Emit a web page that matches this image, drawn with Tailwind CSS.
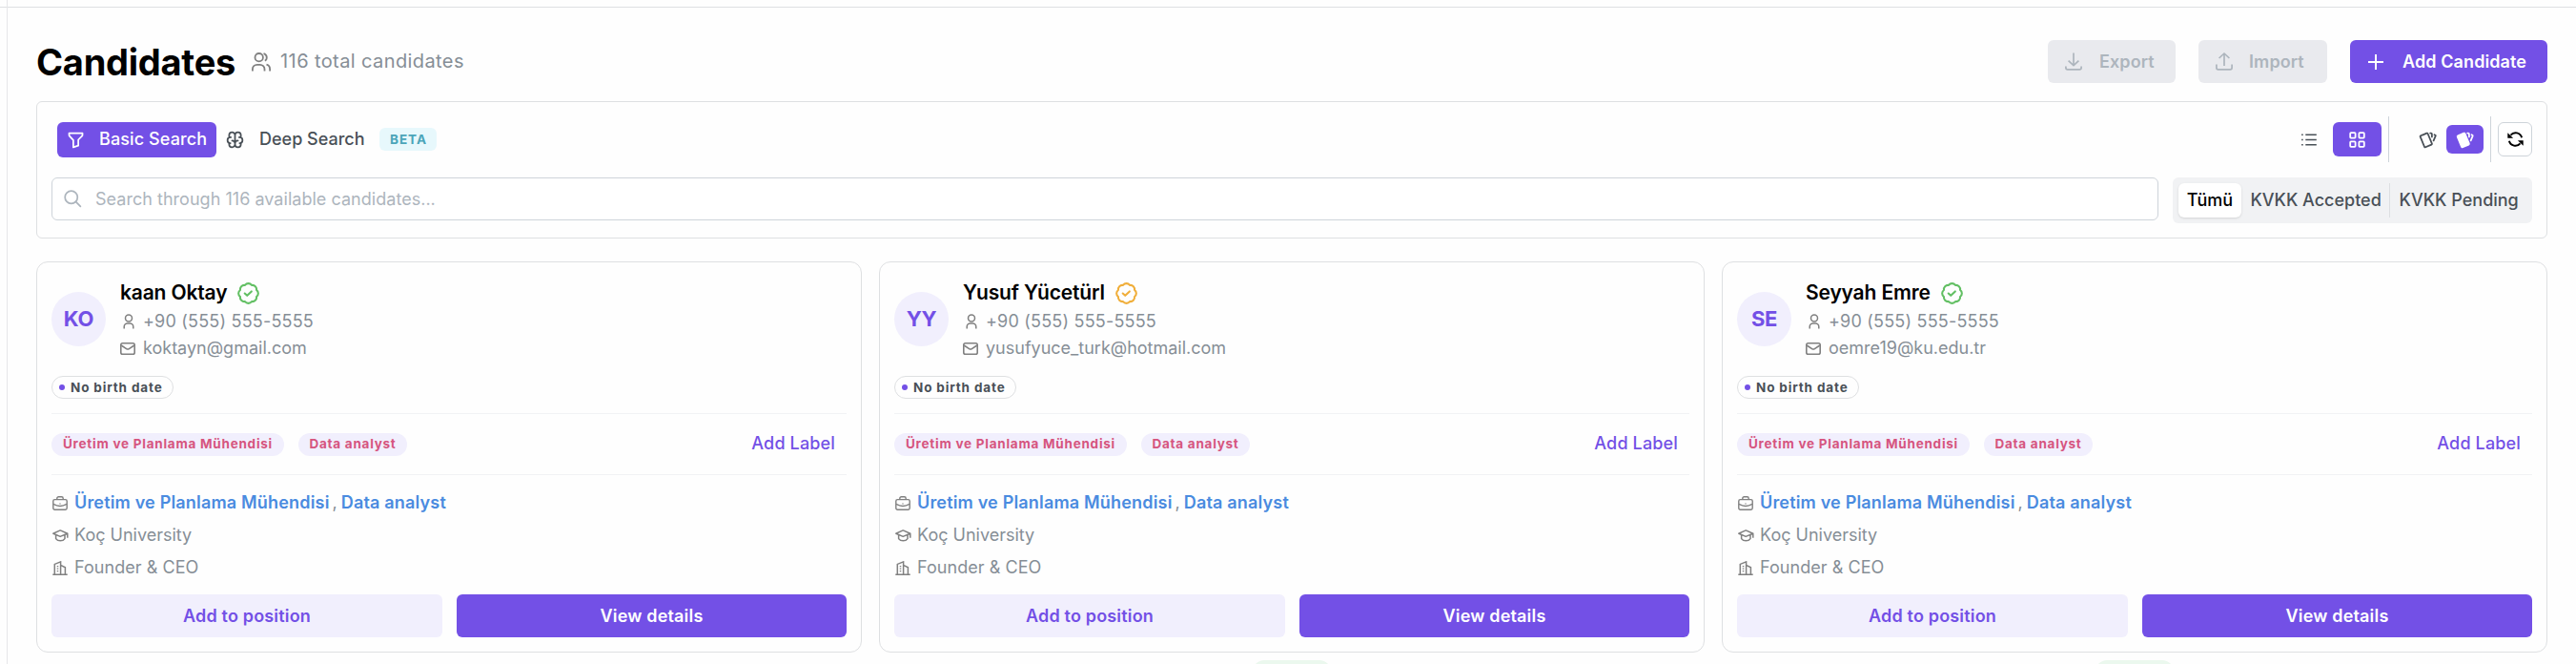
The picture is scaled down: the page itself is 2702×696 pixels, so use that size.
<!doctype html>
<html lang="en">

  <head>
    <meta charset="UTF-8" />
    <meta name="viewport" content="width=device-width, initial-scale=1.0" />
    <title>Candidates</title>
    <script src="https://cdn.jsdelivr.net/npm/@tailwindcss/browser@4"></script>
  </head>

  <body class="bg-[#fefefe] font-[Inter,sans-serif] text-lg text-[#868e96]">

    <!-- Icon sprite -->
    <svg class="hidden" xmlns="http://www.w3.org/2000/svg">
      <symbol id="i-person" viewBox="0 0 12 16">
        <circle cx="6" cy="4.4" r="3.5" />
        <path d="M1.2 15.5v-2a3.4 3.4 0 0 1 3.4-3.4h2.8a3.4 3.4 0 0 1 3.4 3.4v2" />
      </symbol>
      <symbol id="i-mail" viewBox="0 0 16 13">
        <rect x=".8" y=".8" width="14.4" height="11.4" rx="1.8" />
        <path d="M1.2 3l5.4 3.6a2.6 2.6 0 0 0 2.8 0L14.8 3" />
      </symbol>
      <symbol id="i-case" viewBox="0 0 16 15">
        <path d="M4.8 3.6V2.4A1.6 1.6 0 0 1 6.4.8h3.2a1.6 1.6 0 0 1 1.6 1.6v1.2" />
        <rect x=".8" y="3.6" width="14.4" height="10.6" rx="1.6" />
        <path d="M1 8.4c4.5 2.6 9.5 2.6 14 0M8 7.4v1" />
      </symbol>
      <symbol id="i-school" viewBox="0 0 17 13">
        <path d="M.8 4.2L8.2.9l7.6 3.3-7.6 3.2zM15.8 4.4v4.4M3.6 5.8v3.8c2 3 7.4 3 9.4 0V5.8" />
      </symbol>
      <symbol id="i-building" viewBox="0 0 16 15">
        <path d="M.3 14.2h15.4M2.3 14V3.4L8.6.9V14M8.6 4.4l4.8 2.4V14" />
        <path d="M5.5 5v7.6" stroke-dasharray="1.2 1.3" />
      </symbol>
      <symbol id="i-seal" viewBox="2 2 20 20">
        <path d="M21 12c0 1.268-.63 2.39-1.593 3.068a3.745 3.745 0 0 1-1.043 3.296 3.745 3.745 0 0 1-3.296 1.043A3.745 3.745 0 0 1 12 21c-1.268 0-2.39-.63-3.068-1.593a3.746 3.746 0 0 1-3.296-1.043 3.745 3.745 0 0 1-1.043-3.296A3.745 3.745 0 0 1 3 12c0-1.268.63-2.39 1.593-3.068a3.745 3.745 0 0 1 1.043-3.296 3.746 3.746 0 0 1 3.296-1.043A3.746 3.746 0 0 1 12 3c1.268 0 2.39.63 3.068 1.593a3.746 3.746 0 0 1 3.296 1.043 3.746 3.746 0 0 1 1.043 3.296A3.745 3.745 0 0 1 21 12Z" />
        <path d="M8.7 12l2.2 2 4-3.8" />
      </symbol>
    </svg>

    <div class="relative h-[696px] overflow-hidden">
      <!-- App shell edges -->
      <div class="absolute left-0 top-[7px] h-px w-full bg-[#dee0e2]"></div>
      <div class="absolute left-[7px] top-0 h-full w-px bg-[#e6e7e9]"></div>

      <main class="w-[2634px] ml-[38px] pt-[42px]">

        <!-- Title and page actions -->
        <header class="flex h-[45px] items-center">
          <h1 class="text-[38px] leading-none font-bold text-black tracking-[-0.25px]">Candidates</h1>
          <svg class="ml-[17px] w-5 h-5" fill="none" viewBox="0 0 20 20" stroke="#808080" stroke-width="1.8">
            <circle cx="7.7" cy="5.2" r="4.2" />
            <path d="M12.5 1.2a4.2 4.2 0 0 1 1.4 7.6M.9 19.6v-2a4.8 4.8 0 0 1 4.8-4.8h3a4.8 4.8 0 0 1 4.8 4.8v2M15.5 12.6a4.8 4.8 0 0 1 3.6 4.6v2.4" />
          </svg>
          <span class="ml-[10px] text-[20px] tracking-[0.4px]">116 total candidates</span>
          <div class="ml-auto flex gap-6 font-semibold tracking-[0.1px]">
            <button class="flex h-[45px] w-[134px] items-center rounded-md bg-[#e9eaee] pl-[18px] text-[#adb5bd]">
              <svg class="w-[18px] h-[19px]" fill="none" viewBox="0 0 18 19" stroke="currentColor" stroke-width="1.7" stroke-linejoin="round">
                <path d="M9 .5v13M3.6 8.6L9 13.7l5.4-5.1M.9 14.5v1.6a1.8 1.8 0 0 0 1.8 1.8h12.6a1.8 1.8 0 0 0 1.8-1.8v-1.6" />
              </svg>
              <span class="ml-[18px]">Export</span>
            </button>
            <button class="flex h-[45px] w-[135px] items-center rounded-md bg-[#e9eaee] pl-[18px] text-[#adb5bd]">
              <svg class="w-[18px] h-[19px]" fill="none" viewBox="0 0 18 19" stroke="currentColor" stroke-width="1.7" stroke-linejoin="round">
                <path d="M9 14V1M3.6 6L9 1l5.4 5M.9 12.5v3.6a1.8 1.8 0 0 0 1.8 1.8h12.6a1.8 1.8 0 0 0 1.8-1.8v-3.6" />
              </svg>
              <span class="ml-[17px]">Import</span>
            </button>
            <button class="flex h-[45px] w-[207px] items-center rounded-md bg-[#7350e6] pl-[19px] text-white">
              <svg class="w-4 h-4" fill="none" viewBox="0 0 16 16" stroke="currentColor" stroke-width="2">
                <path d="M8 0v16M0 8h16" />
              </svg>
              <span class="ml-5">Add Candidate</span>
            </button>
          </div>
        </header>

        <!-- Search panel -->
        <section class="mt-[19px] h-36 rounded-md border border-[#dee0e2] px-[15px] pt-[15px]">
          <div class="flex h-12 items-center">
            <button class="ml-1.5 flex h-[37px] w-[167px] items-center rounded-md bg-[#7350e6] pl-[9px] font-medium text-white">
              <svg class="w-[21px] h-[21px]" fill="none" viewBox="0 0 24 24" stroke="currentColor" stroke-width="2" stroke-linecap="round" stroke-linejoin="round">
                <path d="M4 4h16v2.172a2 2 0 0 1-.586 1.414L15 12v7l-6 2v-8.5L4.52 7.572A2 2 0 0 1 4 6.227z" />
              </svg>
              <span class="ml-[14px] tracking-[0.1px]">Basic Search</span>
            </button>
            <button class="ml-[9px] flex items-center font-medium text-[#495057]">
              <svg class="w-[21px] h-[21px]" fill="none" viewBox="0 0 24 24" stroke="currentColor" stroke-width="2" stroke-linecap="round" stroke-linejoin="round">
                <path d="M15.5 13a3.5 3.5 0 0 0-3.5 3.5v1a3.5 3.5 0 0 0 7 0v-1.8M8.5 13a3.5 3.5 0 0 1 3.5 3.5v1a3.5 3.5 0 0 1-7 0v-1.8M17.5 16a3.5 3.5 0 0 0 0-7H17M19 9.3V6.5a3.5 3.5 0 0 0-7 0M6.5 16a3.5 3.5 0 0 1 0-7H7M5 9.3V6.5a3.5 3.5 0 0 1 7 0v10" />
              </svg>
              <span class="ml-[15px] w-[111px] text-left whitespace-nowrap">Deep Search</span>
            </button>
            <span class="ml-[15px] flex h-6 w-[60px] items-center justify-center rounded-md bg-[#e7f8fc] pl-px text-[13.5px] font-bold tracking-[1px] text-[#4ba5b9]">BETA</span>

            <!-- View switches -->
            <div class="ml-auto flex h-12 items-center">
              <svg class="w-4 h-[13px] mr-[17px]" fill="none" viewBox="0 0 16 13" stroke="#495057" stroke-width="1.5">
                <path d="M4.3 1.2h11.5M4.3 6.5h11.5M4.3 11.8h11.5M.1 1.2h1.6M.1 6.5h1.6M.1 11.8h1.6" />
              </svg>
              <button class="flex h-9 w-[51px] items-center justify-center rounded-md bg-[#7350e6]">
                <svg class="w-[17px] h-[17px]" fill="none" viewBox="0 0 17 17" stroke="white" stroke-width="1.8">
                  <rect x="1.2" y="1.2" width="5.4" height="5.4" rx=".8" />
                  <rect x="10.4" y="1.2" width="5.4" height="5.4" rx=".8" />
                  <rect x="1.2" y="10.4" width="5.4" height="5.4" rx=".8" />
                  <rect x="10.4" y="10.4" width="5.4" height="5.4" rx=".8" />
                </svg>
              </button>
              <div class="ml-[7px] h-12 w-px bg-[#ced4da]"></div>
              <svg class="ml-[30px] w-[21px] h-[21px]" fill="none" viewBox="0 0 24 24" stroke="#495057" stroke-width="2" stroke-linecap="round" stroke-linejoin="round">
                <path d="M3.604 7.197l7.138-3.109a.96.96 0 0 1 1.27.527l4.924 11.902a1 1 0 0 1-.514 1.304L9.285 20.93a.96.96 0 0 1-1.271-.527L3.09 8.5a1 1 0 0 1 .514-1.304zM15 4h1a1 1 0 0 1 1 1v3.5M20 6c.264.112.52.217.768.315a1 1 0 0 1 .53 1.311L19 13" />
              </svg>
              <button class="ml-[9px] flex h-[30px] w-[39px] items-center justify-center rounded-md bg-[#7350e6]">
                <svg class="w-[21px] h-[21px]" fill="none" viewBox="0 0 24 24" stroke="white" stroke-width="2" stroke-linecap="round" stroke-linejoin="round">
                  <path fill="white" d="M3.604 7.197l7.138-3.109a.96.96 0 0 1 1.27.527l4.924 11.902a1 1 0 0 1-.514 1.304L9.285 20.93a.96.96 0 0 1-1.271-.527L3.09 8.5a1 1 0 0 1 .514-1.304z" />
                  <path d="M15 4h1a1 1 0 0 1 1 1v3.5M20 6c.264.112.52.217.768.315a1 1 0 0 1 .53 1.311L19 13" />
                </svg>
              </button>
              <div class="ml-[7px] h-12 w-px bg-[#ced4da]"></div>
              <button class="ml-[7px] flex h-9 w-9 items-center justify-center rounded-md border border-[#ced4da] bg-white">
                <svg class="w-[17px] h-4" fill="none" viewBox="0 0 17 16" stroke="black" stroke-width="2">
                  <path d="M3.5 3.6a6.7 6.7 0 0 1 11.6 2.6M13.5 12.4A6.7 6.7 0 0 1 1.9 9.8" />
                  <path fill="black" stroke="none" d="M.3 1.2v5.6h5.8zM16.7 14.8V9.2h-5.8z" />
                </svg>
              </button>
            </div>
          </div>

          <div class="mt-4 flex">
            <div class="flex h-[45px] w-[2210px] items-center rounded-md border border-[#ced4da] bg-white pl-[11px] text-[#adb5bd]">
              <svg class="w-[21px] h-[21px]" fill="none" viewBox="0 0 24 24" stroke="currentColor" stroke-width="2" stroke-linecap="round">
                <circle cx="10" cy="10" r="7.5" />
                <path d="M21 21l-5.6-5.6" />
              </svg>
              <span class="ml-[13px] tracking-[0.03px]">Search through 116 available candidates...</span>
            </div>
            <div class="ml-[15px] flex h-12 w-[377px] rounded-md bg-[#f1f2f4] p-1.5 font-medium text-[#495057]">
              <span class="flex w-[66px] items-center justify-center rounded-md bg-white text-black shadow">Tümü</span>
              <span class="flex w-[156px] items-center justify-center pl-px">KVKK Accepted</span>
              <span class="w-px bg-[#dcdfe2]"></span>
              <span class="flex w-[143px] items-center justify-center pl-px">KVKK Pending</span>
            </div>
          </div>
        </section>

        <!-- Candidate cards -->
        <section id="cards" class="mt-6 grid grid-cols-3 gap-[18px]"></section>
      </main>

      <!-- Status pills of the next row, cut off by the viewport -->
      <div class="absolute left-[1314px] top-[692px] h-6 w-[82px] rounded-full bg-[#ebf8ee]"></div>
      <div class="absolute left-[2198px] top-[692px] h-6 w-[82px] rounded-full bg-[#ebf8ee]"></div>
    </div>

    <template id="card">
      <article class="h-[410px] rounded-xl border border-[#dee0e2] px-[15px]">
        <div class="flex h-[119px]">
          <div data-initials class="mt-[31px] flex h-[57px] w-[57px] items-center justify-center rounded-full bg-[#f1effd] text-[22px] font-bold tracking-[-0.3px] text-[#7350e6]"></div>
          <div class="ml-[15px] pt-[18px]">
            <div class="flex h-7 items-center">
              <span data-name class="text-[21px] font-semibold tracking-[-0.15px] text-black"></span>
              <svg data-seal class="ml-[11px] w-[23px] h-[23px]" fill="none" stroke-width="1.8" stroke-linecap="round" stroke-linejoin="round"><use href="#i-seal" /></svg>
            </div>
            <div class="mt-[2px] flex h-7 items-center">
              <svg class="ml-[3px] mr-[9px] w-3 h-4" fill="none" stroke="#808080" stroke-width="1.5"><use href="#i-person" /></svg>
              <span class="tracking-[0.2px]">+90 (555) 555-5555</span>
            </div>
            <div class="flex h-7 items-center">
              <svg class="mr-2 w-4 h-[13px]" fill="none" stroke="#808080" stroke-width="1.6"><use href="#i-mail" /></svg>
              <span data-mail></span>
            </div>
          </div>
        </div>
        <div class="flex h-6 w-32 items-center rounded-full border border-[#dee0e2] pl-[7px] text-[13.5px] font-bold tracking-[0.85px] text-[#495057]">
          <i class="mr-1.5 h-1.5 w-1.5 rounded-full bg-[#7350e6]"></i>
          <span class="whitespace-nowrap">No birth date</span>
        </div>

        <!-- Labels -->
        <div class="mt-[15px] flex h-[65px] items-center border-y border-[#f1f2f4] text-[13.5px] font-bold tracking-[0.75px] text-[#d6557f]">
          <span class="flex h-6 w-[244px] items-center justify-center rounded-full bg-[#f1effd]">Üretim ve Planlama Mühendisi</span>
          <span class="ml-[15px] flex h-6 w-[114px] items-center justify-center rounded-full bg-[#f1effd]">Data analyst</span>
          <button class="ml-auto mr-3 pb-px text-lg font-medium tracking-[0.15px] text-[#7350e6]">Add Label</button>
        </div>

        <!-- Background -->
        <div class="mt-[12px]">
          <div class="flex h-[34px] items-center">
            <svg class="ml-px mr-[7px] w-4 h-[15px]" fill="none" stroke="#808080" stroke-width="1.4"><use href="#i-case" /></svg>
            <span class="font-semibold tracking-[0.18px] text-[#4a8be0]">Üretim ve Planlama Mühendisi</span>
            <span class="ml-[3px] mr-1">,</span>
            <span class="font-semibold tracking-[0.18px] text-[#4a8be0]">Data analyst</span>
          </div>
          <div class="flex h-[34px] items-center">
            <svg class="ml-px mr-1.5 w-[17px] h-[13px]" fill="none" stroke="#808080" stroke-width="1.5" stroke-linejoin="round"><use href="#i-school" /></svg>
            <span>Koç University</span>
          </div>
          <div class="flex h-[34px] items-center">
            <svg class="ml-px mr-[7px] w-4 h-[15px]" fill="none" stroke="#808080" stroke-width="1.5"><use href="#i-building" /></svg>
            <span class="tracking-[0.05px]">Founder &amp; CEO</span>
          </div>
        </div>

        <div class="mt-[11px] flex gap-[15px] font-semibold tracking-[0.18px]">
          <button class="h-[45px] w-[410px] rounded-md bg-[#f1effd] text-[#7350e6]">Add to position</button>
          <button class="h-[45px] flex-1 rounded-md bg-[#7350e6] text-white">View details</button>
        </div>
      </article>
    </template>

    <script>
      const candidates = [
        { initials: "KO", name: "kaan Oktay", mail: "koktayn@gmail.com", seal: "#62bf63" },
        { initials: "YY", name: "Yusuf Yücetürl", mail: "yusufyuce_turk@hotmail.com", seal: "#f0ae3a" },
        { initials: "SE", name: "Seyyah Emre", mail: "oemre19@ku.edu.tr", seal: "#62bf63" },
      ];
      const tpl = document.getElementById("card");
      for (const c of candidates) {
        const card = tpl.content.cloneNode(true);
        card.querySelector("[data-initials]").textContent = c.initials;
        card.querySelector("[data-name]").textContent = c.name;
        card.querySelector("[data-mail]").textContent = c.mail;
        card.querySelector("[data-seal]").setAttribute("stroke", c.seal);
        document.getElementById("cards").append(card);
      }
    </script>
  </body>

</html>
